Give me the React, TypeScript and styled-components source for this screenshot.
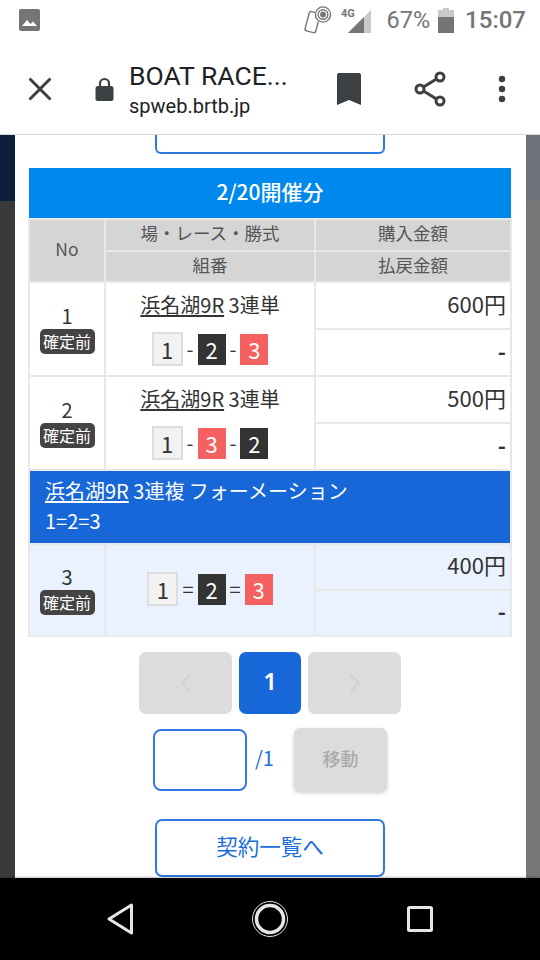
import styled, { createGlobalStyle } from 'styled-components';

const GlobalStyle = createGlobalStyle`
  html, body {
    margin: 0;
    padding: 0;
    background: #000;
  }
  * {
    box-sizing: border-box;
  }
`;

const cjk = `'Noto Sans CJK JP', 'Noto Sans', sans-serif`;

const Screen = styled.div`
  width: 540px;
  height: 960px;
  display: flex;
  flex-direction: column;
  overflow: hidden;
  background: #fff;
  font-family: ${cjk};
`;

/* android status bar */
const StatusBar = styled.div`
  height: 40px;
  flex: none;
  display: flex;
  align-items: center;
  padding: 0 14px 0 19px;
  color: #757575;
  font-family: Roboto, sans-serif;
`;

const StatusRight = styled.div`
  margin-left: auto;
  display: flex;
  align-items: center;
`;

const Percent = styled.span`
  font-size: 23.5px;
  margin: 0 8px 0 11px;
`;

const Clock = styled.span`
  font-size: 24px;
  font-weight: 500;
  margin-left: 11px;
`;

const PhoneIcon = styled.svg`
  margin-right: 7px;
`;

/* custom tab toolbar */
const Toolbar = styled.div`
  height: 95px;
  flex: none;
  display: flex;
  align-items: center;
  padding: 4px 0 0 28px;
  color: #3c4043;
  border-bottom: 1px solid #d8d8d8;
`;

const LockIcon = styled.svg`
  margin-left: 43px;
`;

const Titles = styled.div`
  width: 208px;
  margin-left: 15px;
  color: #202124;
  font-family: Roboto, sans-serif;
`;

const PageTitle = styled.div`
  font-size: 26.5px;
  line-height: 30px;
`;

const PageUrl = styled.div`
  font-size: 20px;
  line-height: 24px;
  margin-top: 3px;
`;

const ToolActions = styled.div`
  display: flex;
  align-items: center;
`;

const ShareIcon = styled.svg`
  margin-left: 53px;
`;

const DotsIcon = styled.svg`
  margin-left: 52px;
`;

const Content = styled.div`
  flex: 1;
  min-height: 0;
  display: flex;
`;

const Side = styled.div<{ $width: number; $top: string; $color: string }>`
  width: ${(p) => p.$width}px;
  flex: none;
  display: flex;
  flex-direction: column;
  background: ${(p) => p.$color};
  &::before {
    content: '';
    height: 66px;
    background: ${(p) => p.$top};
  }
`;

const Modal = styled.div`
  flex: 1;
  min-width: 0;
  overflow: hidden;
  background: #fff;
  padding: 0 15px 0 14px;
  display: flex;
  flex-direction: column;
  align-items: center;
`;

const CutButton = styled.div`
  width: 230px;
  height: 19px;
  flex: none;
  border: 2px solid #2f7ae0;
  border-top: none;
  border-radius: 0 0 6px 6px;
`;

const DateHeader = styled.div`
  width: 100%;
  height: 50px;
  flex: none;
  margin-top: 14px;
  padding-bottom: 4px;
  background: #0088ec;
  color: #fff;
  font-size: 21px;
  font-weight: 500;
  display: flex;
  align-items: center;
  justify-content: center;
`;

const Table = styled.table`
  width: 482px;
  flex: none;
  table-layout: fixed;
  border-collapse: collapse;
`;

const Th = styled.th`
  height: 31.5px;
  padding: 0 0 3px;
  background: #d5d5d5;
  border: 2px solid #e8e8e8;
  color: #555;
  font-size: 17.5px;
  font-weight: 400;
  line-height: 26px;
  text-align: center;
`;

const Td = styled.td<{ $plan?: boolean }>`
  padding: 0;
  height: ${(p) => (p.$plan ? 46 : 47)}px;
  border: 2px solid #e8e8e8;
  background: ${(p) => (p.$plan ? '#e9f2fe' : '#fff')};
  color: #333;
  text-align: center;
  vertical-align: middle;
`;

const LabelCell = styled(Td)`
  padding-bottom: 2px;
`;

const MoneyCell = styled(Td)`
  text-align: right;
  padding: 0 4px 6px 0;
  font-size: 22px;
  line-height: 30px;
  color: #333;
`;

const DashCell = styled(MoneyCell)`
  font-weight: 700;
`;

const Num = styled.div`
  font-size: 20px;
  line-height: 26px;
`;

const Badge = styled.span`
  display: inline-block;
  width: 55px;
  height: 25px;
  background: #444;
  border-radius: 5px;
  color: #fff;
  font-size: 16px;
  line-height: 25px;
  text-align: center;
  vertical-align: top;
`;

const RaceName = styled.div`
  font-size: 20px;
  line-height: 30px;
  margin-bottom: 12px;
  color: #333;
`;

const RaceLink = styled.a`
  color: inherit;
  text-decoration: underline;
  text-underline-offset: 2px;
`;

const Combo = styled.div`
  display: flex;
  align-items: center;
  justify-content: center;
  gap: 4px;
`;

const Sep = styled.span`
  font-size: 20px;
  line-height: 30px;
  color: #333;
`;

const ballColors = {
  1: { bg: '#f2f2f2', fg: '#333', border: '#ddd' },
  2: { bg: '#333', fg: '#fff', border: '#333' },
  3: { bg: '#f56060', fg: '#fff', border: '#f56060' },
} as const;

const Ball = styled.span<{ $n: 1 | 2 | 3 }>`
  display: block;
  width: ${(p) => (p.$n === 1 ? 31 : 28)}px;
  height: ${(p) => (p.$n === 1 ? 34 : 31)}px;
  border: ${(p) => (p.$n === 1 ? 2 : 0)}px solid ${(p) => ballColors[p.$n].border};
  background: ${(p) => ballColors[p.$n].bg};
  color: ${(p) => ballColors[p.$n].fg};
  font-size: 22px;
  line-height: ${(p) => (p.$n === 1 ? 30 : 31)}px;
  text-align: center;
`;

const BandCell = styled.td`
  height: 74px;
  padding: 5px 15px 7px;
  background: #1767d9;
  border: 2px solid #e8e8e8;
  color: #fff;
  font-size: 20px;
  line-height: 30px;
`;

const Pager = styled.div`
  display: flex;
  gap: 7px;
  margin-top: 15px;
  flex: none;
`;

const PageButton = styled.div<{ $active?: boolean }>`
  width: ${(p) => (p.$active ? 62 : 93)}px;
  height: 62px;
  padding-bottom: ${(p) => (p.$active ? 5 : 0)}px;
  border-radius: 7px;
  background: ${(p) => (p.$active ? '#1767d9' : '#dcdcdc')};
  color: #fff;
  font-size: 24px;
  font-weight: 600;
  font-family: 'Noto Sans', sans-serif;
  display: flex;
  align-items: center;
  justify-content: center;
`;

const JumpRow = styled.div`
  display: flex;
  align-items: center;
  margin-top: 14px;
  flex: none;
`;

const JumpInput = styled.input`
  width: 94px;
  height: 62px;
  padding: 0;
  border: 2px solid #2f7ae0;
  border-radius: 8px;
  background: #fff;
  outline: none;
`;

const Total = styled.span`
  width: 47px;
  padding: 0 0 4px 8px;
  color: #1a6ddb;
  font-size: 20px;
`;

const MoveButton = styled.div`
  width: 93px;
  height: 63px;
  padding-bottom: 4px;
  border-radius: 6px;
  background: #dcdcdc;
  box-shadow: 0 2px 4px rgba(0, 0, 0, 0.2);
  color: #aaa;
  font-size: 18px;
  font-weight: 500;
  display: flex;
  align-items: center;
  justify-content: center;
`;

const ListButton = styled.div`
  width: 230px;
  height: 58px;
  flex: none;
  margin-top: 28px;
  padding-bottom: 6px;
  border: 2px solid #2f7ae0;
  border-radius: 7px;
  color: #1a6ddb;
  font-size: 21.5px;
  display: flex;
  align-items: center;
  justify-content: center;
`;

const NavBar = styled.div`
  height: 82px;
  flex: none;
  background: #000;
  display: flex;
  align-items: center;
  justify-content: center;
  gap: 119px;
  box-shadow: 0 -1px 2px rgba(0, 0, 0, 0.25);
`;

type BallNo = 1 | 2 | 3;

function BetRows({
  no,
  amount,
  plan,
  title,
  order,
}: {
  no: number;
  amount: string;
  plan?: boolean;
  title?: string;
  order: BallNo[];
}) {
  const sep = plan ? '=' : '-';
  return (
    <>
      <tr>
        <LabelCell rowSpan={2} $plan={plan}>
          <Num>{no}</Num>
          <Badge>確定前</Badge>
        </LabelCell>
        <LabelCell rowSpan={2} $plan={plan}>
          {title && (
            <RaceName>
              <RaceLink>浜名湖9R</RaceLink> {title}
            </RaceName>
          )}
          <Combo>
            <Ball $n={order[0]}>{order[0]}</Ball>
            <Sep>{sep}</Sep>
            <Ball $n={order[1]}>{order[1]}</Ball>
            <Sep>{sep}</Sep>
            <Ball $n={order[2]}>{order[2]}</Ball>
          </Combo>
        </LabelCell>
        <MoneyCell $plan={plan}>{amount}</MoneyCell>
      </tr>
      <tr>
        <DashCell $plan={plan}>-</DashCell>
      </tr>
    </>
  );
}

export default function App() {
  return (
    <Screen>
      <GlobalStyle />
      <StatusBar>
        <svg width="21" height="22" viewBox="0 0 21 22">
          <rect width="21" height="22" rx="2" fill="#757575" />
          <path d="M3 17l5-6 3.5 4 2.5-2.5 4 4.5z" fill="#fff" />
        </svg>
        <StatusRight>
          <PhoneIcon width="30" height="30" viewBox="0 0 30 30" fill="none" stroke="#757575" strokeWidth="1.4">
            <rect x="5" y="7" width="11" height="20" rx="2" transform="rotate(15 10 17)" />
            <circle cx="21" cy="9.5" r="8.6" fill="#fff" stroke="none" />
            <circle cx="21" cy="9.5" r="2.2" fill="#757575" />
            <circle cx="21" cy="9.5" r="4.8" />
            <circle cx="21" cy="9.5" r="7.6" />
          </PhoneIcon>
          <svg width="36" height="26" viewBox="0 0 36 26">
            <text x="2" y="10" fontSize="11" fontWeight="700" fontFamily="Roboto, sans-serif" fill="#757575">
              4G
            </text>
            <path d="M9 26L32 3v23z" fill="#c9c9c9" />
            <path d="M9 26L25 10v16z" fill="#757575" />
          </svg>
          <Percent>67%</Percent>
          <svg width="16" height="25" viewBox="0 0 16 25">
            <path d="M5 0h6v2h5v23H0V2h5z" fill="#c9c9c9" />
            <rect y="9" width="16" height="16" fill="#757575" />
          </svg>
          <Clock>15:07</Clock>
        </StatusRight>
      </StatusBar>

      <Toolbar>
        <svg width="24" height="24" viewBox="0 0 24 24" stroke="#3c4043" strokeWidth="3">
          <path d="M1.5 1.5l21 21M22.5 1.5l-21 21" />
        </svg>
        <LockIcon width="19" height="24" viewBox="0 0 18 24" fill="none">
          <path d="M4.5 10V6.5a4.5 4.5 0 0 1 9 0V10" stroke="#3c4043" strokeWidth="2.2" />
          <rect y="9" width="18" height="15" rx="2.5" fill="#3c4043" />
        </LockIcon>
        <Titles>
          <PageTitle>BOAT RACE...</PageTitle>
          <PageUrl>spweb.brtb.jp</PageUrl>
        </Titles>
        <ToolActions>
          <svg width="24" height="32" viewBox="0 0 24 32">
            <path d="M2 0h20a2 2 0 0 1 2 2v30l-12-5-12 5V2a2 2 0 0 1 2-2z" fill="#3c4043" />
          </svg>
          <ShareIcon width="32" height="36" viewBox="0 0 32 36" fill="none" stroke="#3c4043" strokeWidth="3">
            <circle cx="6" cy="18" r="4" />
            <circle cx="26" cy="6" r="4" />
            <circle cx="26" cy="30" r="4" />
            <path d="M9.5 16l13-8M9.5 20l13 8" />
          </ShareIcon>
          <DotsIcon width="8" height="28" viewBox="0 0 8 28" fill="#3c4043">
            <circle cx="4" cy="4" r="3.2" />
            <circle cx="4" cy="14" r="3.2" />
            <circle cx="4" cy="24" r="3.2" />
          </DotsIcon>
        </ToolActions>
      </Toolbar>

      <Content>
        <Side $width={15} $top="#0b1e3a" $color="#3a3a3a" />
        <Modal>
          <CutButton />
          <DateHeader>2/20開催分</DateHeader>
          <Table>
            <colgroup>
              <col style={{ width: 76 }} />
              <col style={{ width: 210 }} />
              <col style={{ width: 196 }} />
            </colgroup>
            <thead>
              <tr>
                <Th rowSpan={2}>No</Th>
                <Th>場・レース・勝式</Th>
                <Th>購入金額</Th>
              </tr>
              <tr>
                <Th>組番</Th>
                <Th>払戻金額</Th>
              </tr>
            </thead>
            <tbody>
              <BetRows no={1} amount="600円" title="3連単" order={[1, 2, 3]} />
              <BetRows no={2} amount="500円" title="3連単" order={[1, 3, 2]} />
              <tr>
                <BandCell colSpan={3}>
                  <RaceLink>浜名湖9R</RaceLink> 3連複 フォーメーション
                  <br />
                  1=2=3
                </BandCell>
              </tr>
              <BetRows no={3} amount="400円" plan order={[1, 2, 3]} />
            </tbody>
          </Table>

          <Pager>
            <PageButton>
              <svg width="12" height="20" viewBox="0 0 12 20" fill="none" stroke="#d0d0d0" strokeWidth="1.6">
                <path d="M11 1L2 10l9 9" />
              </svg>
            </PageButton>
            <PageButton $active>1</PageButton>
            <PageButton>
              <svg width="12" height="20" viewBox="0 0 12 20" fill="none" stroke="#d0d0d0" strokeWidth="1.6">
                <path d="M1 1l9 9-9 9" />
              </svg>
            </PageButton>
          </Pager>

          <JumpRow>
            <JumpInput />
            <Total>/1</Total>
            <MoveButton>移動</MoveButton>
          </JumpRow>

          <ListButton>契約一覧へ</ListButton>
        </Modal>
        <Side $width={14} $top="#6e7178" $color="#777" />
      </Content>

      <NavBar>
        <svg width="26" height="32" viewBox="0 0 26 32" fill="none" stroke="#e6e6e6" strokeWidth="3" strokeLinejoin="round">
          <path d="M24.5 2v28L2 16z" />
        </svg>
        <svg width="36" height="36" viewBox="0 0 36 36" fill="none" stroke="#e6e6e6">
          <circle cx="18" cy="18" r="17.5" strokeWidth="1" />
          <circle cx="18" cy="18" r="13.5" strokeWidth="3.5" />
        </svg>
        <svg width="26" height="26" viewBox="0 0 26 26" fill="none" stroke="#e6e6e6" strokeWidth="3">
          <rect x="1.5" y="1.5" width="23" height="23" rx="1" />
        </svg>
      </NavBar>
    </Screen>
  );
}
